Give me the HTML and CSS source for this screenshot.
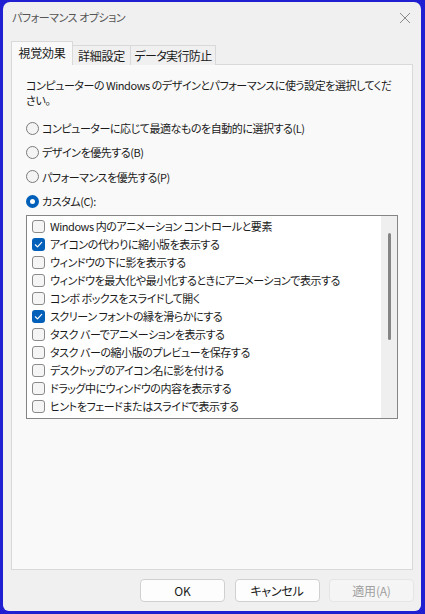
FILE: index.html
```html
<!DOCTYPE html>
<html lang="ja">
<head>
<meta charset="utf-8">
<title>パフォーマンス オプション</title>
<link rel="stylesheet" href="styles.css">
</head>
<body>
<div class="window">
  <div class="titlebar">
    <span class="title">パフォーマンス オプション</span>
    <svg class="close" width="12" height="12" viewBox="0 0 12 12"><path d="M1 1L11 11M11 1L1 11" stroke="#8a8a8a" stroke-width="1" fill="none"/></svg>
  </div>
  <div class="tabs">
    <div class="tab active t1">視覚効果</div>
    <div class="tab t2">詳細設定</div>
    <div class="tab t3">データ実行防止</div>
  </div>
  <div class="panel">
    <p class="desc">コンピューターの Windows のデザインとパフォーマンスに使う設定を選択してください。</p>
    <div class="radios">
      <div class="radio"><span class="rb"></span><span>コンピューターに応じて最適なものを自動的に選択する(L)</span></div>
      <div class="radio"><span class="rb"></span><span>デザインを優先する(B)</span></div>
      <div class="radio"><span class="rb"></span><span>パフォーマンスを優先する(P)</span></div>
      <div class="radio"><span class="rb on"></span><span>カスタム(C):</span></div>
    </div>
    <div class="listbox">
      <div class="items">
        <div class="item"><span class="cb"></span><span>Windows 内のアニメーション コントロールと要素</span></div>
        <div class="item"><span class="cb on"><svg width="13" height="13" viewBox="0 0 13 13"><path d="M3.3 6.8L5.5 8.9L9.7 4.4" stroke="#fff" stroke-width="1.2" fill="none" stroke-linecap="round" stroke-linejoin="round"/></svg></span><span>アイコンの代わりに縮小版を表示する</span></div>
        <div class="item"><span class="cb"></span><span>ウィンドウの下に影を表示する</span></div>
        <div class="item"><span class="cb"></span><span>ウィンドウを最大化や最小化するときにアニメーションで表示する</span></div>
        <div class="item"><span class="cb"></span><span>コンボ ボックスをスライドして開く</span></div>
        <div class="item"><span class="cb on"><svg width="13" height="13" viewBox="0 0 13 13"><path d="M3.3 6.8L5.5 8.9L9.7 4.4" stroke="#fff" stroke-width="1.2" fill="none" stroke-linecap="round" stroke-linejoin="round"/></svg></span><span>スクリーン フォントの縁を滑らかにする</span></div>
        <div class="item"><span class="cb"></span><span>タスク バーでアニメーションを表示する</span></div>
        <div class="item"><span class="cb"></span><span>タスク バーの縮小版のプレビューを保存する</span></div>
        <div class="item"><span class="cb"></span><span>デスクトップのアイコン名に影を付ける</span></div>
        <div class="item"><span class="cb"></span><span>ドラッグ中にウィンドウの内容を表示する</span></div>
        <div class="item"><span class="cb"></span><span>ヒントをフェードまたはスライドで表示する</span></div>
      </div>
      <div class="scrollbar"><div class="thumb"></div></div>
    </div>
  </div>
  <div class="buttons">
    <div class="btn">OK</div>
    <div class="btn">キャンセル</div>
    <div class="btn disabled">適用(A)</div>
  </div>
</div>
</body>
</html>
```
FILE: styles.css
```css
* { box-sizing: border-box; }
html, body { margin: 0; padding: 0; }
body {
  background: #2020d2;
  width: 425px;
  height: 614px;
  overflow: hidden;
  font-family: "Noto Sans CJK JP", "Noto Sans", sans-serif;
  font-size: 11px;
  letter-spacing: -0.45px;
  font-feature-settings: "palt";
  color: #1a1a1a;
}
.window {
  margin: 2px 4px 0 3px;
  width: 418px;
  height: 609px;
  background: #f0f0f0;
  border-radius: 7px 7px 6px 6px;
  display: flex;
  flex-direction: column;
}
.titlebar {
  height: 30px;
  display: flex;
  align-items: center;
  justify-content: space-between;
  padding: 0 9px 0 9px;
}
.title { color: #555; line-height: 16px; }
.close { margin-right: 1px; margin-top: 1px; }
.tabs {
  display: flex;
  align-items: flex-end;
  padding: 0 0 0 8px;
  height: 33px;
  margin-bottom: -1px;
  position: relative;
  z-index: 1;
}
.tab {
  height: 20px;
  line-height: 19px;
  font-size: 12px;
  letter-spacing: -0.2px;
  text-align: center;
  border: 1px solid #d9d9d9;
  border-bottom: none;
  background: #f0f0f0;
  color: #1a1a1a;
}
.tab + .tab { border-left: none; }
.t1 { width: 62px; }
.t2 { width: 58px; }
.t3 { width: 85px; letter-spacing: -0.6px; }
.tab.active {
  height: 24px;
  line-height: 22px;
  background: #f9f9f9;
  border-right: 1px solid #d9d9d9;
}
.panel {
  margin: 0 8px 0 8px;
  height: 506px;
  background: #f9f9f9;
  border: 1px solid #d9d9d9;
  padding: 13px 14px 0 14px;
}
.desc {
  margin: 0;
  line-height: 15px;
}
.radios {
  margin-top: 8px;
  display: flex;
  flex-direction: column;
}
.radio {
  height: 24.3px;
  display: flex;
  align-items: center;
  gap: 3px;
}
.rb {
  width: 13px;
  height: 13px;
  border-radius: 50%;
  border: 1px solid #7a7a7a;
  background: #f4f4f4;
  flex: none;
}
.rb.on {
  border: 4px solid #005fb8;
  background: #fff;
}
.listbox {
  margin-top: 2px;
  height: 204px;
  border: 1px solid #858585;
  background: #fff;
  display: flex;
  overflow: hidden;
}
.items {
  flex: 1;
  padding-left: 5px;
  padding-top: 1px;
  overflow: hidden;
}
.item {
  height: 18px;
  display: flex;
  align-items: center;
  gap: 5px;
  white-space: nowrap;
}
.cb {
  width: 13px;
  height: 13px;
  border: 1px solid #8a8a8a;
  border-radius: 3px;
  background: #f5f5f5;
  flex: none;
  display: flex;
}
.cb.on {
  border: none;
  background: #005fb8;
}
.scrollbar {
  width: 16px;
  background: #efefef;
  flex: none;
  display: flex;
  justify-content: center;
  padding-top: 17px;
}
.thumb {
  width: 3px;
  height: 107px;
  border-radius: 2px;
  background: #858585;
}
.buttons {
  display: flex;
  justify-content: flex-end;
  gap: 9.5px;
  padding: 9px 7px 0 0;
}
.btn {
  width: 85px;
  height: 23px;
  border: 1px solid #d0d0d0;
  border-radius: 4px;
  background: #fdfdfd;
  text-align: center;
  line-height: 21px;
  font-size: 12px;
  letter-spacing: -0.2px;
  color: #1a1a1a;
}
.btn.disabled {
  background: #f5f5f5;
  border-color: #e5e5e5;
  color: #a0a0a0;
}
```
